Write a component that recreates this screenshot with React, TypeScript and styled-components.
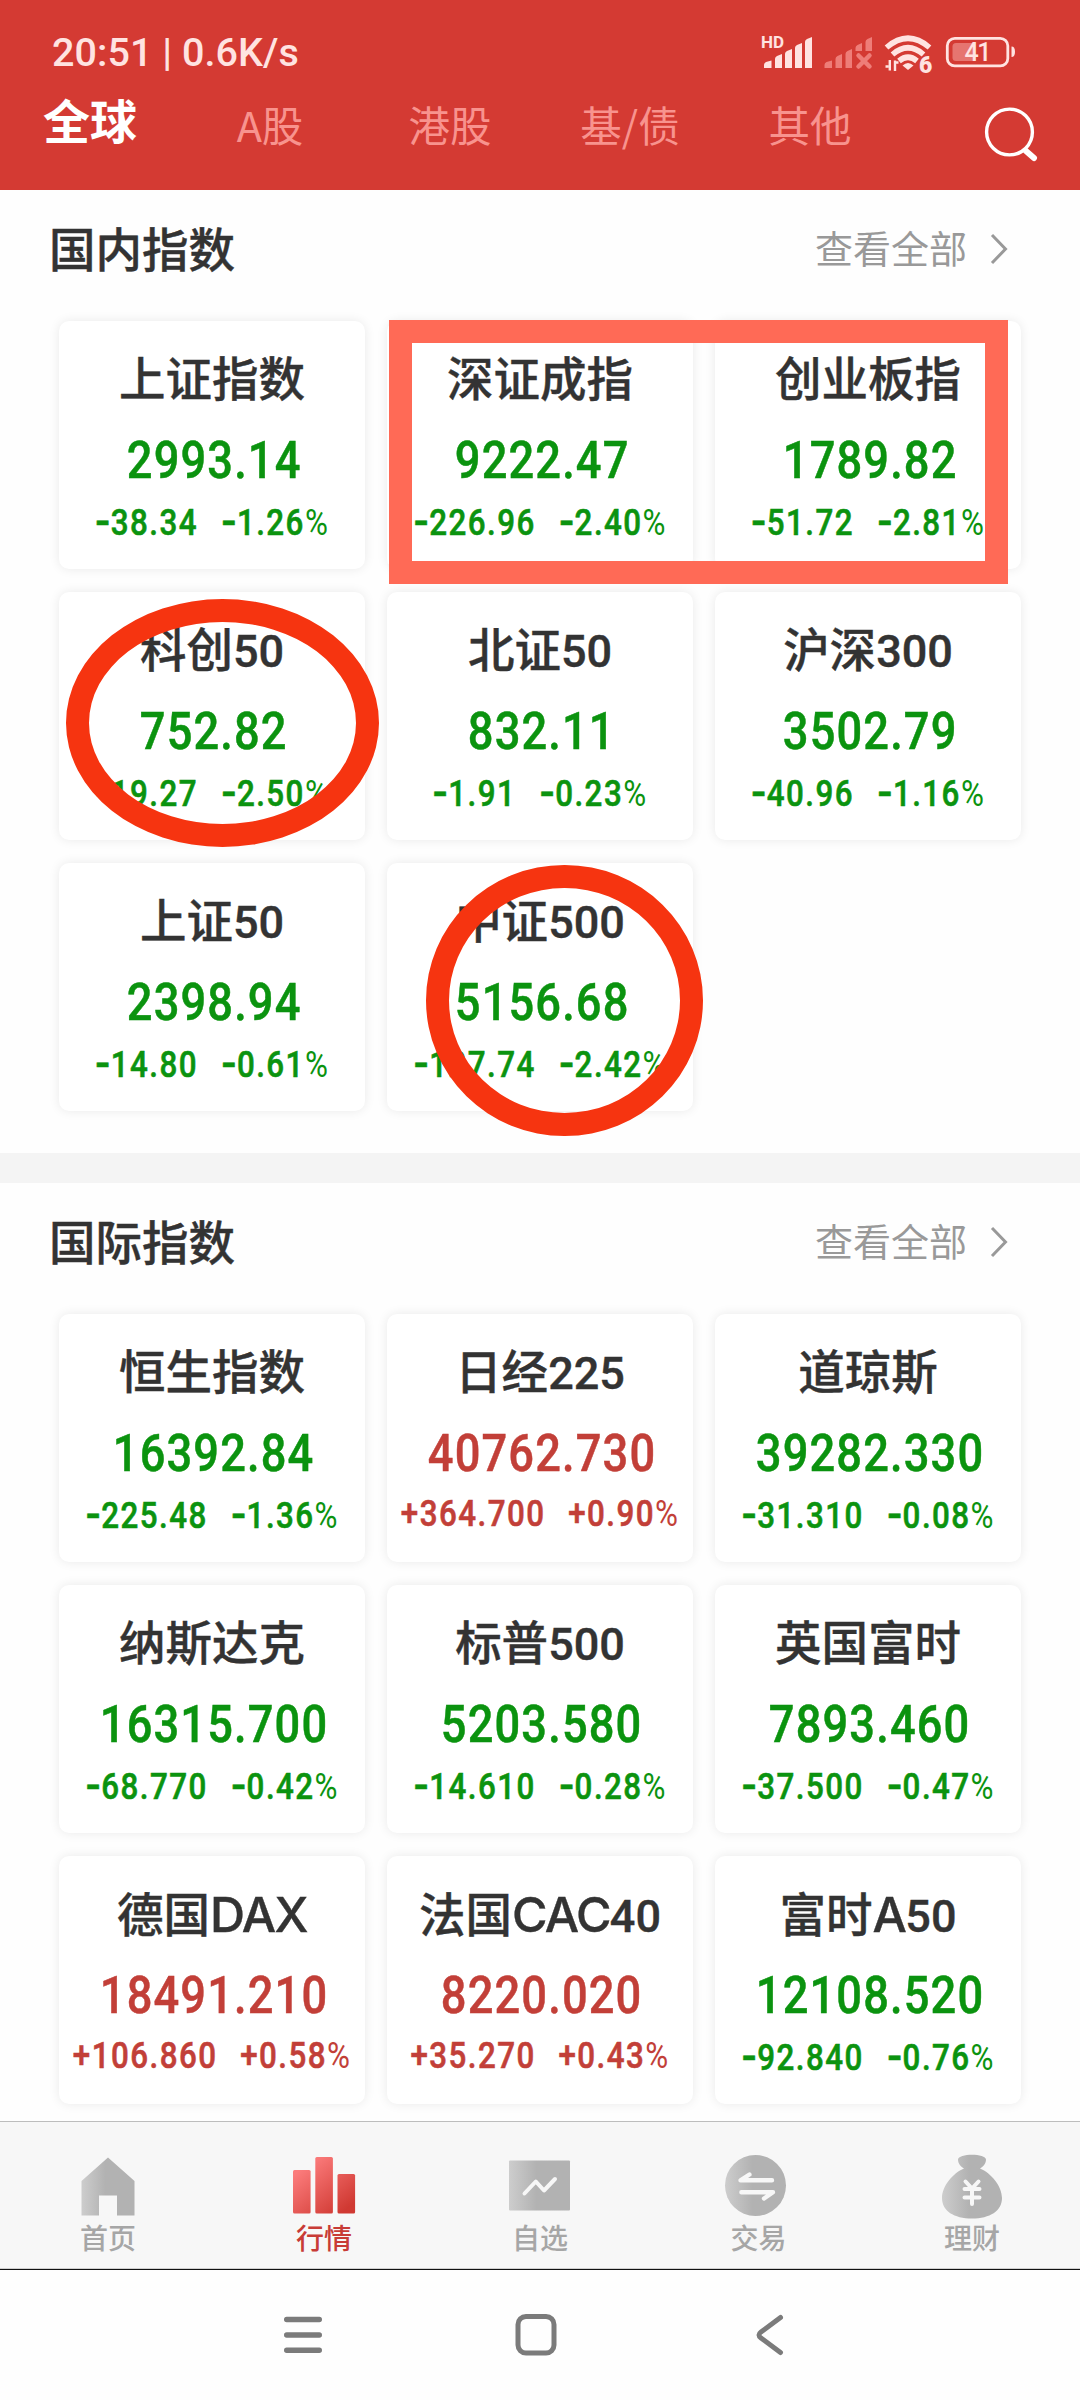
import React from "react";
import styled, { createGlobalStyle } from "styled-components";

const GREEN = "#0b930f";
const RED = "#c23f38";
const CJK = `"Noto Sans CJK SC", "Noto Sans", sans-serif`;
const NUM = `Roboto, "Noto Sans CJK SC", sans-serif`;

const GlobalStyle = createGlobalStyle`
  * { box-sizing: border-box; }
  body { margin: 0; background: #fff; font-family: ${CJK}; }
`;

const Screen = styled.div`
  position: relative;
  display: flex;
  flex-direction: column;
  width: 1080px;
  height: 2400px;
  overflow: hidden;
  background: #fefefe;
`;

const Header = styled.header`
  display: flex;
  flex-direction: column;
  height: 190px;
  flex: none;
  background: #d43a33;
`;

const StatusBar = styled.div`
  display: flex;
  justify-content: space-between;
  align-items: flex-start;
  height: 84px;
  padding: 30px 62px 0 52px;
`;

const Clock = styled.div`
  font: 500 39.5px/46px ${NUM};
  letter-spacing: 0.05px;
  color: #ffe3e1;
  white-space: pre;
`;

const Tabs = styled.nav`
  display: flex;
  height: 106px;
`;

const Tab = styled.div<{ $active?: boolean }>`
  width: 180px;
  text-align: center;
  padding-top: ${(p) => (p.$active ? "3px" : "8px")};
  font-family: ${CJK};
  font-size: ${(p) => (p.$active ? 47 : 41.5)}px;
  font-weight: ${(p) => (p.$active ? 700 : 400)};
  line-height: 64px;
  color: ${(p) => (p.$active ? "#fff" : "#f8938e")};
`;

const SearchBox = styled.div`
  flex: 1;
  padding: 21px 0 0 82px;
`;

const Section = styled.section`
  position: relative;
  flex: none;
  height: 963px;
`;

const SectionHead = styled.div`
  display: flex;
  align-items: center;
  justify-content: space-between;
  height: 131px;
  padding: 0 72px 14px 49px;
`;

const SectionTitle = styled.h2`
  margin: 0 0 4px;
  font: 500 46.5px/60px ${CJK};
  -webkit-text-stroke: 0.4px #333;
  color: #333;
`;

const More = styled.div`
  display: flex;
  align-items: center;
  gap: 23px;
  font: 400 38px/50px ${CJK};
  color: #999;
`;

const MoreText = styled.span`
  margin-bottom: 3px;
`;

const Grid = styled.div`
  display: grid;
  grid-template-columns: repeat(3, 306px);
  grid-auto-rows: 248px;
  gap: 23px 22px;
  padding-left: 59px;
`;

const Card = styled.article`
  display: flex;
  flex-direction: column;
  align-items: center;
  padding-top: 35px;
  border-radius: 10px;
  background: #fff;
  box-shadow: 0 0 11px rgba(0, 0, 0, 0.085);
  white-space: nowrap;
`;

const Name = styled.div`
  height: 48px;
  font: 500 46.5px/48px ${NUM};
  -webkit-text-stroke: 0.4px #333;
  color: #333;
`;

const Digits = styled.span`
  font-size: 45px;
`;

const Letters = styled.span`
  font-family: Inter, sans-serif;
  font-size: 48.5px;
  letter-spacing: -1.6px;
`;

const Value = styled.div<{ $up: boolean }>`
  margin-top: 31px;
  padding-left: 4px;
  font: 500 52px/52px ${NUM};
  letter-spacing: 1.3px;
  color: ${(p) => (p.$up ? RED : GREEN)};
  -webkit-text-stroke: 0.5px currentColor;
  transform: scaleX(0.87);
`;

const Changes = styled.div<{ $up: boolean }>`
  display: flex;
  gap: 26px;
  margin-top: 16px;
  font: 500 36px/36px ${NUM};
  letter-spacing: 1.7px;
  color: ${(p) => (p.$up ? RED : GREEN)};
  -webkit-text-stroke: 0.6px currentColor;
  transform: scaleX(0.87);
`;

const Minus = styled.span`
  font-family: Inter, sans-serif;
  font-size: 40px;
  font-weight: 600;
  letter-spacing: 0;
`;

const Percent = styled.span`
  font-weight: 400;
  -webkit-text-stroke: 0;
`;

const Divider = styled.div`
  flex: none;
  height: 30px;
  background: #f4f4f4;
`;

const IntlSection = styled(Section)`
  height: 938px;
`;

const TabBar = styled.nav`
  display: flex;
  flex: none;
  height: 149px;
  background: #f7f7f7;
  border-top: 1.5px solid #bdbdbd;
  border-bottom: 1px solid #111;
  box-shadow: inset 0 -1px #cfcfcf;
`;

const TabItem = styled.div<{ $active?: boolean }>`
  display: flex;
  flex-direction: column;
  align-items: center;
  width: 216px;
  padding-top: 29px;
  font: 500 28px/36px ${CJK};
  color: ${(p) => (p.$active ? "#c83b36" : "#a6a6a6")};
`;

const TabLabel = styled.span<{ $indent: number }>`
  padding-left: ${(p) => p.$indent}px;
`;

const SystemNav = styled.div`
  display: flex;
  flex: 1;
  padding: 36px 193px 0 186px;
`;

const SystemKey = styled.div`
  flex: 1;
  display: flex;
  justify-content: center;
`;

/* Marker strokes drawn over the cards */
const Mark = styled.div<{ $x: number; $y: number; $w: number; $h: number; $round?: boolean }>`
  position: absolute;
  left: ${(p) => p.$x}px;
  top: ${(p) => p.$y}px;
  width: ${(p) => p.$w}px;
  height: ${(p) => p.$h}px;
  border: 23.5px solid ${(p) => (p.$round ? "#f63410" : "#ff6a56")};
  border-radius: ${(p) => (p.$round ? "50%" : "0")};
`;

type Quote = [name: string, value: string, change: string, percent: string];

const domestic: Quote[] = [
  ["上证指数", "2993.14", "-38.34", "-1.26"],
  ["深证成指", "9222.47", "-226.96", "-2.40"],
  ["创业板指", "1789.82", "-51.72", "-2.81"],
  ["科创50", "752.82", "-19.27", "-2.50"],
  ["北证50", "832.11", "-1.91", "-0.23"],
  ["沪深300", "3502.79", "-40.96", "-1.16"],
  ["上证50", "2398.94", "-14.80", "-0.61"],
  ["中证500", "5156.68", "-127.74", "-2.42"],
];

const international: Quote[] = [
  ["恒生指数", "16392.84", "-225.48", "-1.36"],
  ["日经225", "40762.730", "+364.700", "+0.90"],
  ["道琼斯", "39282.330", "-31.310", "-0.08"],
  ["纳斯达克", "16315.700", "-68.770", "-0.42"],
  ["标普500", "5203.580", "-14.610", "-0.28"],
  ["英国富时", "7893.460", "-37.500", "-0.47"],
  ["德国DAX", "18491.210", "+106.860", "+0.58"],
  ["法国CAC40", "8220.020", "+35.270", "+0.43"],
  ["富时A50", "12108.520", "-92.840", "-0.76"],
];

const Signed = ({ text }: { text: string }) =>
  text[0] === "-" ? (
    <>
      <Minus>-</Minus>
      {text.slice(1)}
    </>
  ) : (
    <>{text}</>
  );

const IndexName = ({ text }: { text: string }) => (
  <Name>
    {text.split(/([A-Z]+|\d+)/).filter(Boolean).map((part) =>
      /^\d/.test(part) ? (
        <Digits key={part}>{part}</Digits>
      ) : /^[A-Z]/.test(part) ? (
        <Letters key={part}>{part}</Letters>
      ) : (
        part
      )
    )}
  </Name>
);

const QuoteCard = ({ quote: [name, value, change, percent] }: { quote: Quote }) => {
  const up = change[0] === "+";
  return (
    <Card>
      <IndexName text={name} />
      <Value $up={up}>{value}</Value>
      <Changes $up={up}>
        <span>
          <Signed text={change} />
        </span>
        <span>
          <Signed text={percent} />
          <Percent>%</Percent>
        </span>
      </Changes>
    </Card>
  );
};

const Heading = ({ title }: { title: string }) => (
  <SectionHead>
    <SectionTitle>{title}</SectionTitle>
    <More>
      <MoreText>查看全部</MoreText>
      <svg width="18" height="32" viewBox="0 0 18 32" fill="none">
        <path d="M2 2L15.500 16L2 30" stroke="#999" strokeWidth="3" />
      </svg>
    </More>
  </SectionHead>
);

const StatusIcons = () => (
  <svg width="258" height="46" viewBox="760 30 258 46" fill="#ffe3e1">
    <text x="761" y="48" fontFamily="Roboto, sans-serif" fontWeight="700" fontSize="17">HD</text>
    <path d="M764 65q0-2 2-3l5.500-1.500V68H764zM775 59q0-2 2-3l5-2v14h-7zM785 54q0-2 2-3l5-2v19h-7zM795 48q0-2 2-3l5-2v25h-7zM805 42q0-2 2-3l5-2v31h-7z" />
    <g fill="#ee7d78">
      <path d="M824.500 65q0-2 2-3l5.500-1.500V68h-7.500zM835.500 59q0-2 2-3l4.500-2v14h-6.500zM845.500 54q0-2 2-3l4.500-2v19h-6.500zM855.500 48q0-2 2-3l4.500-2v8h-6.500zM865.500 42q0-2 2-3l4.500-2v14h-6.500z" />
      <path d="M858.500 55.500L869.500 66.500M869.500 55.500L858.500 66.500" stroke="#ee7d78" strokeWidth="4.500" strokeLinecap="round" />
    </g>
    <g fill="none" stroke="#ffe3e1" strokeWidth="5.600">
      <path d="M886.500 47.500Q908 29 929.500 47.500" />
      <path d="M892.500 54.500Q908 41 923.500 54.500" />
      <path d="M899 61Q908 53.500 917 61" />
    </g>
    <path d="M902.500 65.500Q908 60.500 913.500 65.500L908 70z" />
    <path d="M885.500 66.500h3M889.800 60v10.500M895 60.500v10.500M895 62.500h3.500" stroke="#ffe3e1" strokeWidth="2.400" fill="none" />
    <text x="919" y="73" fontFamily="Roboto, sans-serif" fontWeight="900" fontSize="23" stroke="#d43a33" strokeWidth="2.500" paintOrder="stroke">6</text>
    <rect x="947.300" y="38.300" width="60.500" height="27.600" rx="7.500" fill="none" stroke="#ffe3e1" strokeWidth="2.800" />
    <path d="M1011.500 46.500q3.500 0 3.500 5.300t-3.500 5.300z" />
    <path d="M956 43h19v18h-19q-3.500 0-3.500-3.500v-11q0-3.500 3.500-3.500z" fill="#e67570" />
    <text x="964.500" y="61.200" fontFamily="Roboto, sans-serif" fontWeight="500" fontSize="25" letterSpacing="-1.400">41</text>
  </svg>
);

const NavIcon = ({ kind }: { kind: string }) => (
  <svg width="72" height="68" viewBox="0 0 72 68" fill="url(#navGrey)">
    {kind === "home" && <path d="M36 6.500L62.500 30v34.500H45V44.500H27v20H9.500V30z" />}
    {kind === "market" && (
      <g fill="url(#navRed)">
        <rect x="5" y="19" width="17.600" height="43.500" rx="1.500" />
        <rect x="27.300" y="6" width="17.600" height="56.500" rx="1.500" />
        <rect x="49.500" y="23" width="17.600" height="39.500" rx="1.500" />
      </g>
    )}
    {kind === "watch" && (
      <>
        <rect x="5" y="9.500" width="61" height="50" rx="1" />
        <path d="M20.500 42.500L31.800 30.500L40 39.500L51 28" fill="none" stroke="#f7f7f7" strokeWidth="4" strokeLinecap="round" strokeLinejoin="round" />
      </>
    )}
    {kind === "trade" && (
      <>
        <ellipse cx="35.500" cy="34.500" rx="30.500" ry="30.500" />
        <path d="M52 29.300H20.500L29.400 23.500M21.400 41.200H53L44 47.500" fill="none" stroke="#f7f7f7" strokeWidth="4.400" strokeLinecap="round" strokeLinejoin="round" />
      </>
    )}
    {kind === "wealth" && (
      <>
        <path d="M22 8.500C22 2 50 2 50 8.500C50 13 47 15.500 44 17.500C55 22 66 35 66 47C66 60 54 67.500 36 67.500C18 67.500 6 60 6 47C6 35 17 22 28 17.500C25 15.500 22 13 22 8.500z" />
        <path d="M29.500 30.500L36 37.500L42.500 30.500M28.500 38H43.500M28.500 46.500H43.500M36 37.500V53" fill="none" stroke="#f7f7f7" strokeWidth="4" strokeLinecap="round" />
      </>
    )}
    <defs>
      <linearGradient id="navGrey">
        <stop offset="0" stopColor="#cdcdcd" />
        <stop offset="0.450" stopColor="#b2b2b2" />
      </linearGradient>
      <linearGradient id="navRed" gradientUnits="userSpaceOnUse" x1="18" y1="14" x2="56" y2="60">
        <stop offset="0" stopColor="#fb7b7b" />
        <stop offset="1" stopColor="#d03932" />
      </linearGradient>
    </defs>
  </svg>
);

const navItems = [
  ["home", "首页"],
  ["market", "行情"],
  ["watch", "自选"],
  ["trade", "交易"],
  ["wealth", "理财"],
];

export default function App() {
  return (
    <Screen>
      <GlobalStyle />
      <Header>
        <StatusBar>
          <Clock>20:51 | 0.6K/s</Clock>
          <StatusIcons />
        </StatusBar>
        <Tabs>
          {["全球", "A股", "港股", "基/债", "其他"].map((t, i) => (
            <Tab key={t} $active={i === 0}>{t}</Tab>
          ))}
          <SearchBox>
            <svg width="60" height="60" viewBox="0 0 60 60" fill="none" stroke="#fff">
              <circle cx="27.500" cy="27" r="22.900" strokeWidth="3.400" />
              <path d="M44 46L52 53" strokeWidth="6" strokeLinecap="round" />
            </svg>
          </SearchBox>
        </Tabs>
      </Header>
      <Section>
        <Heading title="国内指数" />
        <Grid>
          {domestic.map((q) => <QuoteCard key={q[0]} quote={q} />)}
        </Grid>
        <Mark $x={388.5} $y={129.5} $w={619} $h={264} />
        <Mark $x={66} $y={409} $w={313} $h={248} $round />
        <Mark $x={426} $y={674.5} $w={276.5} $h={271} $round />
      </Section>
      <Divider />
      <IntlSection>
        <Heading title="国际指数" />
        <Grid>
          {international.map((q) => <QuoteCard key={q[0]} quote={q} />)}
        </Grid>
      </IntlSection>
      <TabBar>
        {navItems.map(([kind, label]) => (
          <TabItem key={kind} $active={kind === "market"}>
            <NavIcon kind={kind} />
            <TabLabel $indent={kind === "trade" ? 5 : 0}>{label}</TabLabel>
          </TabItem>
        ))}
      </TabBar>
      <SystemNav>
        <SystemKey>
          <svg width="60" height="60" viewBox="0 0 60 60" fill="none" stroke="#7b7b7b" strokeWidth="5.400" strokeLinecap="round">
            <path d="M13.700 13.500H46.300M13.700 29H46.300M13.700 44.300H46.300" />
          </svg>
        </SystemKey>
        <SystemKey>
          <svg width="60" height="60" viewBox="0 0 60 60" fill="none" stroke="#7b7b7b" strokeWidth="5">
            <rect x="11" y="10.500" width="36" height="36.500" rx="8" />
          </svg>
        </SystemKey>
        <SystemKey>
          <svg width="60" height="60" viewBox="0 0 60 60" fill="none" stroke="#7b7b7b" strokeWidth="5" strokeLinecap="round">
            <path d="M40.500 11.500L21 26Q17 29 21 32L40.500 46.500" />
          </svg>
        </SystemKey>
      </SystemNav>
    </Screen>
  );
}
